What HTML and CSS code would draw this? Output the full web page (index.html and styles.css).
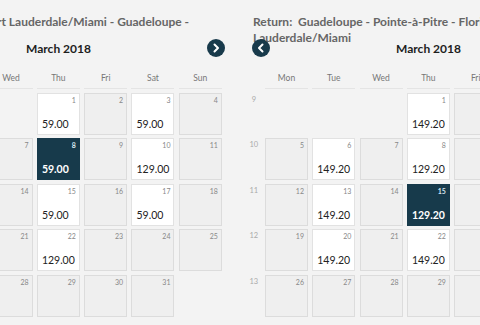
FILE: index.html
```html
<!DOCTYPE html>
<html lang="en">
<head>
    <meta charset="UTF-8">
    <meta name="viewport" content="width=device-width, initial-scale=1.0">
    <title>Fare Calendar</title>
    <link rel="stylesheet" href="styles.css">
</head>
<body>
    <div class="page">
        <!-- Outbound -->
        <section class="calendar">
            <div class="cal-title">Outbound: Florida Fort Lauderdale/Miami - Guadeloupe - Pointe-à-Pitre</div>
            <div class="cal-month">
                <span class="month-name">March 2018</span>
                <button class="nav-btn nav-next" aria-label="Next month">
                    <svg viewBox="0 0 18 18" width="18" height="18"><path d="M7.5 5.5 L11 9 L7.5 12.5" fill="none" stroke="#fff" stroke-width="2" stroke-linecap="round" stroke-linejoin="round"/></svg>
                </button>
            </div>
            <div class="cal-grid">
                <div class="wk-head"></div>
                <div class="dow">Mon</div>
                <div class="dow">Tue</div>
                <div class="dow">Wed</div>
                <div class="dow">Thu</div>
                <div class="dow">Fri</div>
                <div class="dow">Sat</div>
                <div class="dow">Sun</div>

                <div class="wk">9</div>
                <div class="blank"></div>
                <div class="blank"></div>
                <div class="blank"></div>
                <div class="day priced"><span class="num">1</span><span class="price">59.00</span></div>
                <div class="day"><span class="num">2</span></div>
                <div class="day priced"><span class="num">3</span><span class="price">59.00</span></div>
                <div class="day"><span class="num">4</span></div>

                <div class="wk">10</div>
                <div class="day"><span class="num">5</span></div>
                <div class="day"><span class="num">6</span></div>
                <div class="day"><span class="num">7</span></div>
                <div class="day selected"><span class="num">8</span><span class="price">59.00</span></div>
                <div class="day"><span class="num">9</span></div>
                <div class="day priced"><span class="num">10</span><span class="price">129.00</span></div>
                <div class="day"><span class="num">11</span></div>

                <div class="wk">11</div>
                <div class="day"><span class="num">12</span></div>
                <div class="day"><span class="num">13</span></div>
                <div class="day"><span class="num">14</span></div>
                <div class="day priced"><span class="num">15</span><span class="price">59.00</span></div>
                <div class="day"><span class="num">16</span></div>
                <div class="day priced"><span class="num">17</span><span class="price">59.00</span></div>
                <div class="day"><span class="num">18</span></div>

                <div class="wk">12</div>
                <div class="day"><span class="num">19</span></div>
                <div class="day"><span class="num">20</span></div>
                <div class="day"><span class="num">21</span></div>
                <div class="day priced"><span class="num">22</span><span class="price">129.00</span></div>
                <div class="day"><span class="num">23</span></div>
                <div class="day"><span class="num">24</span></div>
                <div class="day"><span class="num">25</span></div>

                <div class="wk">13</div>
                <div class="day"><span class="num">26</span></div>
                <div class="day"><span class="num">27</span></div>
                <div class="day"><span class="num">28</span></div>
                <div class="day"><span class="num">29</span></div>
                <div class="day"><span class="num">30</span></div>
                <div class="day"><span class="num">31</span></div>
                <div class="blank"></div>
            </div>
        </section>

        <!-- Return -->
        <section class="calendar">
            <div class="cal-title">Return:&nbsp; Guadeloupe - Pointe-à-Pitre - Florida Fort Lauderdale/Miami</div>
            <div class="cal-month">
                <span class="month-name">March 2018</span>
                <button class="nav-btn nav-prev" aria-label="Previous month">
                    <svg viewBox="0 0 18 18" width="18" height="18"><path d="M10.5 5.5 L7 9 L10.5 12.5" fill="none" stroke="#fff" stroke-width="2" stroke-linecap="round" stroke-linejoin="round"/></svg>
                </button>
            </div>
            <div class="cal-grid">
                <div class="wk-head"></div>
                <div class="dow">Mon</div>
                <div class="dow">Tue</div>
                <div class="dow">Wed</div>
                <div class="dow">Thu</div>
                <div class="dow">Fri</div>
                <div class="dow">Sat</div>
                <div class="dow">Sun</div>

                <div class="wk">9</div>
                <div class="blank"></div>
                <div class="blank"></div>
                <div class="blank"></div>
                <div class="day priced"><span class="num">1</span><span class="price">149.20</span></div>
                <div class="day"><span class="num">2</span></div>
                <div class="day"><span class="num">3</span></div>
                <div class="day"><span class="num">4</span></div>

                <div class="wk">10</div>
                <div class="day"><span class="num">5</span></div>
                <div class="day priced"><span class="num">6</span><span class="price">149.20</span></div>
                <div class="day"><span class="num">7</span></div>
                <div class="day priced"><span class="num">8</span><span class="price">129.20</span></div>
                <div class="day"><span class="num">9</span></div>
                <div class="day"><span class="num">10</span></div>
                <div class="day"><span class="num">11</span></div>

                <div class="wk">11</div>
                <div class="day"><span class="num">12</span></div>
                <div class="day priced"><span class="num">13</span><span class="price">149.20</span></div>
                <div class="day"><span class="num">14</span></div>
                <div class="day selected"><span class="num">15</span><span class="price">129.20</span></div>
                <div class="day"><span class="num">16</span></div>
                <div class="day"><span class="num">17</span></div>
                <div class="day"><span class="num">18</span></div>

                <div class="wk">12</div>
                <div class="day"><span class="num">19</span></div>
                <div class="day priced"><span class="num">20</span><span class="price">149.20</span></div>
                <div class="day"><span class="num">21</span></div>
                <div class="day priced"><span class="num">22</span><span class="price">149.20</span></div>
                <div class="day"><span class="num">23</span></div>
                <div class="day"><span class="num">24</span></div>
                <div class="day"><span class="num">25</span></div>

                <div class="wk">13</div>
                <div class="day"><span class="num">26</span></div>
                <div class="day"><span class="num">27</span></div>
                <div class="day"><span class="num">28</span></div>
                <div class="day"><span class="num">29</span></div>
                <div class="day"><span class="num">30</span></div>
                <div class="day"><span class="num">31</span></div>
                <div class="blank"></div>
            </div>
        </section>
    </div>
</body>
</html>
```

FILE: styles.css
```css
body {
    margin: 0;
    padding: 0;
    font-family: 'Lato', 'Open Sans', sans-serif;
    background-color: #f3f3f3;
    color: #222;
    overflow: hidden;
}

.page {
    display: flex;
    gap: 25px;
    margin-left: -123px;
    width: 800px;
}

.calendar {
    position: relative;
    width: 345px;
    flex: none;
}

.cal-title {
    padding: 14px 6px 0;
    font-size: 12px;
    font-weight: 700;
    line-height: 16px;
    color: #666;
}

.cal-month {
    position: relative;
    margin-top: -3px;
    padding-left: 18px;
    height: 12px;
    line-height: 12px;
    text-align: center;
    font-size: 12px;
    font-weight: 700;
    color: #1e1e1e;
}

.nav-btn {
    position: absolute;
    top: -4px;
    width: 18px;
    height: 18px;
    padding: 0;
    border: none;
    border-radius: 50%;
    background-color: #183a4b;
    cursor: pointer;
}

.nav-btn svg {
    display: block;
}

.nav-next {
    right: -3px;
}

.nav-prev {
    left: 5px;
}

.cal-grid {
    display: grid;
    grid-template-columns: 13.7px repeat(7, 43px);
    grid-template-rows: 22px;
    grid-auto-rows: 42px;
    column-gap: 4.3px;
    row-gap: 3.6px;
    margin-top: 12px;
}

.dow {
    display: flex;
    align-items: center;
    justify-content: center;
    font-size: 8.5px;
    color: #777;
    border-bottom: 1px solid #e4e4e4;
}

.wk {
    padding-top: 2px;
    text-align: center;
    font-size: 7.5px;
    color: #aaa;
}

.day {
    display: flex;
    flex-direction: column;
    justify-content: space-between;
    box-sizing: border-box;
    padding: 2px 3px 4px 4px;
    background-color: #efefef;
    border: 1px solid #dcdcdc;
}

.day .num {
    align-self: flex-end;
    font-size: 7px;
    line-height: 9px;
    color: #888;
}

.day .price {
    font-size: 10.5px;
    line-height: 12px;
    color: #222;
}

.day.priced {
    background-color: #fff;
    border-color: #e2e2e2;
}

.day.selected {
    background-color: #173a4b;
    border-color: #173a4b;
}

.day.selected .num {
    color: #d8e6ee;
    font-weight: 700;
}

.day.selected .price {
    color: #fff;
    font-weight: 700;
}
```
